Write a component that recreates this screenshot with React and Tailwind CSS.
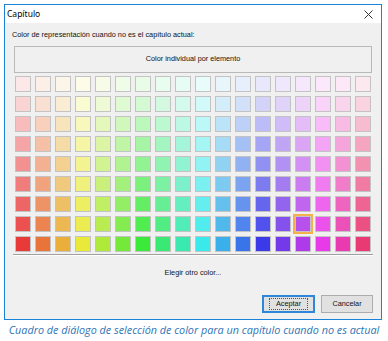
import React from "react";

const hues = Array.from({ length: 18 }, (_, i) => i * 20);
const lights = [95, 90.5, 85.5, 80.5, 76, 71.5, 66.5, 62, 57];

export default function App() {
  return (
    <div className="w-[388px] h-[341px] bg-white relative overflow-hidden" style={{ fontFamily: '"Liberation Sans", Arial, sans-serif' }}>
      <div className="ml-[4px] mt-[4px] w-[378px] h-[316px] border border-[#1a83d8] bg-[#f0f0f0] flex flex-col">
        {/* title bar */}
        <div className="h-[18px] bg-white flex items-center justify-between pl-[2px] pr-[6px]">
          <span className="text-[8.5px] leading-none text-black" style={{ fontFamily: '"Noto Sans", sans-serif' }}>Capítulo</span>
          <svg width="9" height="9" viewBox="0 0 9 9" className="mr-[2px]">
            <path d="M0.5 0.5 L8.5 8.5 M8.5 0.5 L0.5 8.5" stroke="#333" strokeWidth="1" />
          </svg>
        </div>
        {/* content */}
        <div className="flex flex-col px-[9px]">
          <div className="mt-[7px] text-[7.3px] leading-[10px] text-[#111] -ml-[2px]">
            Color de representación cuando no es el capítulo actual:
          </div>
          <div className="mt-[6px] h-[27px] border border-[#b9b9b9] bg-[#f0f0f0] flex items-center justify-center text-[7.3px] text-[#111]">
            Color individual por elemento
          </div>
          <div className="mt-[3px] mx-[1px] grid grid-cols-[repeat(18,16px)] gap-[4px]">
            {lights.map((l, r) =>
              hues.map((h, c) => {
                const sel = r === 7 && c === 14;
                return (
                  <div
                    key={r + "-" + c}
                    className={
                      "w-[16px] h-[16px] border border-[#c3c3c3]" +
                      (sel ? " outline-2 outline-[#f3b04c] outline-offset-[0px]" : "")
                    }
                    style={{ backgroundColor: `hsl(${h}, 80%, ${l}%)` }}
                  />
                );
              })
            )}
          </div>
          <div className="mt-[2px] -mx-[1px] h-[2px] border-t border-[#a0a0a0] border-b border-b-white" />
          <div className="mt-[12px] text-center text-[7.3px] leading-[10px] text-[#111]">Elegir otro color...</div>
          <div className="mt-[17px] flex justify-end gap-[6px] mr-[-1px]">
            <button className="w-[53px] h-[18px] border-2 border-[#2f87d9] bg-[#e1e1e1] text-[7.3px] text-[#111] flex items-center justify-center">
              <span className="px-[6px] border border-dotted border-[#555] leading-[10px]">Aceptar</span>
            </button>
            <button className="w-[52px] h-[18px] border border-[#adadad] bg-[#e1e1e1] text-[7.3px] text-[#111] flex items-center justify-center">
              Cancelar
            </button>
          </div>
        </div>
      </div>
      <div className="mt-[3px] text-center italic text-[10.8px] leading-[14px] text-[#2f74b5]" style={{ fontFamily: '"Open Sans", sans-serif' }}>
        Cuadro de diálogo de selección de color para un capítulo cuando no es actual
      </div>
    </div>
  );
}
